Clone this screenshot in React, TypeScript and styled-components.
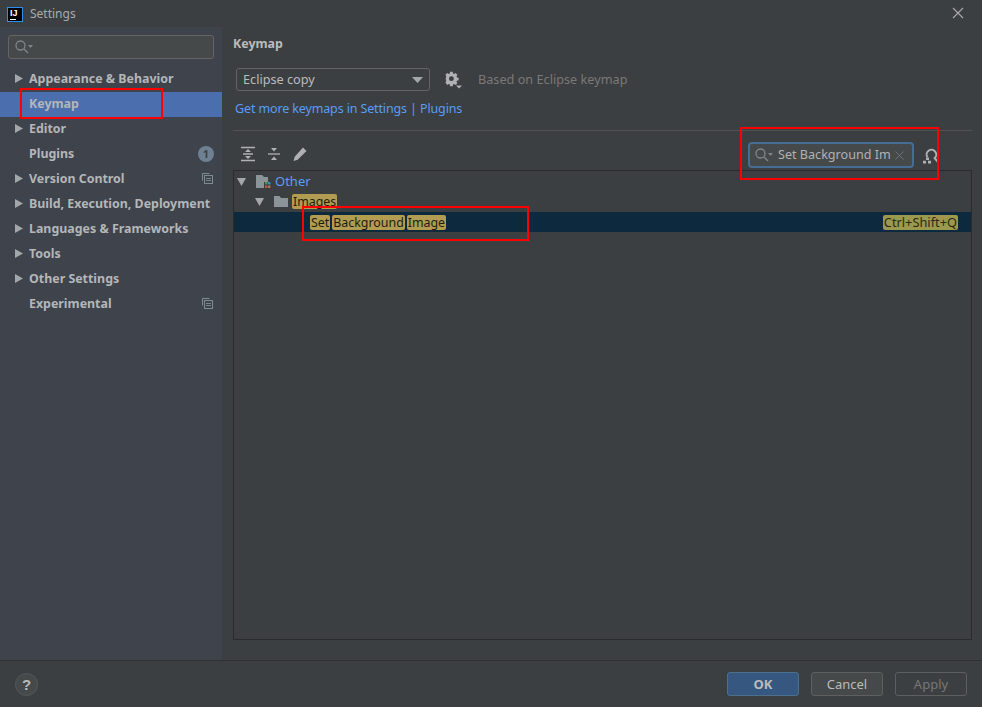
import styled, {createGlobalStyle} from 'styled-components'
import {ReactNode} from 'react'

const GlobalStyle = createGlobalStyle`
  html, body {
    margin: 0;
    padding: 0;
    background: #3c3f41;
  }
  body {
    font-family: "Noto Sans", "Open Sans", sans-serif;
    font-size: 13px;
    color: #bbbbbb;
  }
  * {
    box-sizing: border-box;
  }
`

const menuItems = [
    {label: 'Appearance & Behavior', arrow: true},
    {label: 'Keymap', selected: true},
    {label: 'Editor', arrow: true},
    {label: 'Plugins', badge: true},
    {label: 'Version Control', arrow: true, copy: true},
    {label: 'Build, Execution, Deployment', arrow: true},
    {label: 'Languages & Frameworks', arrow: true},
    {label: 'Tools', arrow: true},
    {label: 'Other Settings', arrow: true},
    {label: 'Experimental', copy: true},
]

function SearchIcon() {
    return (
        <svg width="20" height="16" viewBox="0 0 20 16" fill="none">
            <circle cx="6.5" cy="6.5" r="4.5" stroke="#7f8587" strokeWidth="1.3"/>
            <path d="M10 10l4 4" stroke="#7f8587" strokeWidth="1.4"/>
            <path d="M14 6h5l-2.5 3z" fill="#7f8587"/>
        </svg>
    )
}

function CopyIcon() {
    return (
        <svg width="11" height="11" viewBox="0 0 11 11" fill="none" stroke="#7f8b91">
            <path d="M.5 7.5v-7h7"/>
            <rect x="2.5" y="2.5" width="8" height="8"/>
            <path d="M4 5.5h5M4 7.5h5" strokeWidth=".9"/>
        </svg>
    )
}

function Caret({down}: {down?: boolean}) {
    return (
        <svg width="9" height="9" viewBox="0 0 9 9" fill="#a4a7aa">
            {down ? <path d="M0 1h9L4.5 9z"/> : <path d="M1 0l8 4.5L1 9z"/>}
        </svg>
    )
}

function Mark({children}: {children: ReactNode}) {
    return <Highlight>{children}</Highlight>
}

function App() {
    return (
        <Window>
            <GlobalStyle/>
            <TitleBar>
                <Logo><b>IJ</b><i/></Logo>
                <TitleText>Settings</TitleText>
                <CloseButton>
                    <svg width="12" height="12" viewBox="0 0 12 12" stroke="#a9abad" strokeWidth="1.1">
                        <path d="M1 1l10 10M11 1L1 11"/>
                    </svg>
                </CloseButton>
            </TitleBar>
            <Body>
                <Sidebar>
                    <SideSearch><SearchIcon/></SideSearch>
                    <Menu>
                        {menuItems.map((item) => (
                            <MenuRow key={item.label} $selected={item.selected}>
                                <ArrowSlot>{item.arrow && <Caret/>}</ArrowSlot>
                                <MenuLabel>{item.label}</MenuLabel>
                                {item.badge && <Badge>1</Badge>}
                                {item.copy && <CopySlot><CopyIcon/></CopySlot>}
                            </MenuRow>
                        ))}
                    </Menu>
                    <RedBox $left={20} $top={61} $width={143} $height={31}/>
                </Sidebar>
                <Main>
                    <Heading>Keymap</Heading>
                    <KeymapRow>
                        <Dropdown>
                            <DropdownText>Eclipse copy</DropdownText>
                            <svg width="11" height="6" viewBox="0 0 11 6" fill="#a4a7aa"><path d="M0 0h11L5.5 6z"/></svg>
                        </Dropdown>
                        <GearButton>
                            <svg width="18" height="18" viewBox="0 0 18 18">
                                <path fill="#afb1b3" fillRule="evenodd" d="M6.2 1h3.2l.4 2 1.3.6 1.8-1.1 2.2 2.2-1.1 1.8.6 1.4 2 .4v3.1l-2 .4-.6 1.4 1.1 1.7-2.2 2.2-1.8-1.1-1.3.6-.4 2H6.2l-.4-2-1.3-.6-1.8 1.1L.5 14l1.1-1.7L1 10.9V7.8l.6-1.4L.5 4.7l2.2-2.2 1.8 1.1 1.3-.6zM7.8 6.3a3 3 0 1 0 0 6 3 3 0 0 0 0-6z" transform="scale(.82)"/>
                                <path fill="#afb1b3" d="M11 14.5h6l-3 3z"/>
                            </svg>
                        </GearButton>
                        <Based>Based on Eclipse keymap</Based>
                    </KeymapRow>
                    <LinkLine>Get more keymaps in Settings | Plugins</LinkLine>
                    <Divider/>
                    <Toolbar>
                        <ToolIcons>
                            <svg width="16" height="16" viewBox="0 0 16 16" fill="none" stroke="#afb1b3">
                                <path d="M1 1.5h14M1 14.5h14M3 8h10" strokeWidth="1.3"/>
                                <path d="M5 6l3-3 3 3zM5 10l3 3 3-3z" fill="#afb1b3" stroke="none"/>
                            </svg>
                            <svg width="16" height="16" viewBox="0 0 16 16" fill="none" stroke="#afb1b3">
                                <path d="M2 8h12" strokeWidth="1.3"/>
                                <path d="M5 2l3 3.5L11 2zM5 14l3-3.5 3 3.5z" fill="#afb1b3" stroke="none"/>
                            </svg>
                            <svg width="16" height="16" viewBox="0 0 16 16" fill="#afb1b3">
                                <path d="M11 1.5l3.5 3.5-8.8 8.8L1.5 15l1.2-4.2z"/>
                            </svg>
                        </ToolIcons>
                        <FindField>
                            <SearchIcon/>
                            <FindText>Set Background Im</FindText>
                            <svg width="9" height="9" viewBox="0 0 9 9" stroke="#6e7375"><path d="M.5.5l8 8M8.5.5l-8 8"/></svg>
                        </FindField>
                        <ShortcutFind>
                            <svg width="16" height="16" viewBox="0 0 16 16" fill="none">
                                <path d="M4.4 9.2A4.8 4.8 0 1 1 11.6 10.2L15 14" stroke="#afb1b3" strokeWidth="2"/>
                                <path d="M3 9.5h3v2.5H3zM0 12.8h3v2.7H0zM5 12.8h3v2.7H5z" fill="#afb1b3"/>
                            </svg>
                        </ShortcutFind>
                        <RedBox $left={507} $top={-4} $width={199} $height={53}/>
                    </Toolbar>
                    <Tree>
                        <TreeRow $indent={3} $height={20}>
                            <TreeCaret><Caret down/></TreeCaret>
                            <svg width="16" height="15" viewBox="0 0 16 15">
                                <path fill="#8a9499" d="M1 1h6l2 2h4v5H9v6H1z"/>
                                <rect x="10" y="8" width="2.4" height="2.4" fill="#499c54"/>
                                <rect x="13" y="8" width="2.4" height="2.4" fill="#3592c4"/>
                                <rect x="10" y="11.5" width="2.4" height="2.4" fill="#c75450"/>
                                <rect x="13" y="11.5" width="2.4" height="2.4" fill="#b07a4a"/>
                            </svg>
                            <OtherLabel>Other</OtherLabel>
                        </TreeRow>
                        <TreeRow $indent={21} $height={21}>
                            <TreeCaret><Caret down/></TreeCaret>
                            <svg width="16" height="13" viewBox="0 0 16 13"><path fill="#8a9499" d="M1 1h5.5l1.5 2h7v9H1z"/></svg>
                            <ImagesMark>Images</ImagesMark>
                        </TreeRow>
                        <SelectedRow>
                            <Words><Mark>Set</Mark><Mark>Background</Mark><Mark>Image</Mark></Words>
                            <ShortcutMark>Ctrl+Shift+Q</ShortcutMark>
                        </SelectedRow>
                        <RedBox $left={68} $top={35} $width={227} $height={35}/>
                    </Tree>
                </Main>
            </Body>
            <Footer>
                <HelpButton>?</HelpButton>
                <Buttons>
                    <OkButton>OK</OkButton>
                    <DialogButton>Cancel</DialogButton>
                    <ApplyButton>Apply</ApplyButton>
                </Buttons>
            </Footer>
        </Window>
    )
}

const Window = styled.div`
  width: 982px;
  height: 707px;
  display: flex;
  flex-direction: column;
  overflow: hidden;
  background: #3c3f41;
`

const TitleBar = styled.div`
  height: 27px;
  display: flex;
  align-items: center;
  padding: 2px 0 0 7px;
  flex: none;
`

const Logo = styled.div`
  width: 16px;
  height: 15px;
  background: #000;
  border: 1px solid #2d8fe8;
  color: #fff;
  position: relative;
  b {
    display: block;
    font: bold 9px/9px "Liberation Sans", sans-serif;
    padding: 1px 0 0 2px;
  }
  i {
    position: absolute;
    left: 2px;
    bottom: 1px;
    width: 6px;
    height: 1px;
    background: #fff;
  }
`

const TitleText = styled.span`
  margin: -2px 0 0 7px;
  color: #a9abad;
  font-size: 12px;
`

const CloseButton = styled.div`
  margin: -4px 18px 0 auto;
  display: flex;
`

const Body = styled.div`
  flex: 1;
  display: flex;
  min-height: 0;
`

const Sidebar = styled.div`
  position: relative;
  width: 222px;
  flex: none;
  background: #3e434c;
  padding-top: 8px;
`

const SideSearch = styled.div`
  width: 206px;
  height: 24px;
  margin-left: 8px;
  background: #45494a;
  border: 1px solid #646464;
  border-radius: 3px;
  display: flex;
  align-items: center;
  padding-left: 5px;
`

const Menu = styled.div`
  margin-top: 8px;
`

const MenuRow = styled.div<{$selected?: boolean}>`
  height: 25px;
  display: flex;
  align-items: center;
  padding: 0 8px 2px 0;
  background: ${(p) => (p.$selected ? '#4b6eaf' : 'transparent')};
`

const ArrowSlot = styled.span`
  width: 29px;
  padding-left: 14px;
  display: flex;
  flex: none;
`

const MenuLabel = styled.span`
  font-weight: 700;
  font-size: 12.4px;
  color: #b4b6b8;
  white-space: nowrap;
`

const Badge = styled.span`
  margin-left: auto;
  width: 16px;
  height: 16px;
  border-radius: 50%;
  background: #6e8092;
  color: #3e434c;
  font-size: 11px;
  font-weight: 700;
  line-height: 16px;
  text-align: center;
`

const CopySlot = styled.span`
  margin-left: auto;
  margin-right: 1px;
  display: flex;
`

const Main = styled.div`
  flex: 1;
  min-width: 0;
  padding: 0 10px 20px 11px;
  display: flex;
  flex-direction: column;
`

const Heading = styled.div`
  height: 19px;
  margin-top: 7px;
  font-weight: 700;
  font-size: 12.4px;
  line-height: 19px;
`

const KeymapRow = styled.div`
  margin-top: 15px;
  display: flex;
  align-items: center;
  padding-left: 3px;
  height: 23px;
`

const Dropdown = styled.div`
  width: 194px;
  height: 23px;
  border: 1px solid #646464;
  border-radius: 3px;
  background: #3c3f41;
  display: flex;
  align-items: center;
  justify-content: space-between;
  padding: 0 6px 0 6px;
  color: #bbbbbb;
`

const DropdownText = styled.span`
  font-size: 12.7px;
  margin-top: -2px;
`

const GearButton = styled.div`
  margin-left: 15px;
  width: 18px;
  display: flex;
`

const Based = styled.span`
  margin-left: 15px;
  margin-top: -2px;
  font-size: 12.7px;
  color: #787878;
`

const LinkLine = styled.div`
  margin-top: 9px;
  padding-left: 2px;
  height: 18px;
  line-height: 18px;
  font-size: 12.5px;
  letter-spacing: -0.13px;
  color: #589df6;
`

const Divider = styled.div`
  margin-top: 12px;
  height: 1px;
  background: #515151;
`

const Toolbar = styled.div`
  position: relative;
  height: 39px;
  display: flex;
  align-items: center;
  padding-top: 7px;
`

const ToolIcons = styled.div`
  display: flex;
  gap: 10px;
  padding-left: 7px;
`

const FindField = styled.div`
  position: absolute;
  left: 515px;
  top: 11px;
  width: 166px;
  height: 26px;
  background: #45494a;
  border: 2px solid #466d94;
  border-radius: 4px;
  display: flex;
  align-items: center;
  padding: 0 8px 0 4px;
  gap: 4px;
`

const FindText = styled.span`
  flex: 1;
  overflow: hidden;
  white-space: nowrap;
  font-size: 12.6px;
  margin-top: -1px;
  color: #b0b2b4;
`

const ShortcutFind = styled.div`
  position: absolute;
  left: 690px;
  top: 17px;
  display: flex;
`

const Tree = styled.div`
  position: relative;
  flex: 1;
  border: 1px solid #2b2b2b;
  background: #3c3f41;
  padding-top: 0;
`

const TreeRow = styled.div<{$indent: number; $height: number}>`
  height: ${(p) => p.$height}px;
  display: flex;
  align-items: center;
  padding-left: ${(p) => p.$indent}px;
`

const TreeCaret = styled.span`
  width: 18px;
  display: flex;
`

const OtherLabel = styled.span`
  margin-left: 4px;
  color: #589df6;
`

const Highlight = styled.span`
  display: inline-block;
  height: 15px;
  line-height: 15px;
  font-size: 12.4px;
  padding: 0 1px;
  border-radius: 2px;
  background: #b19c52;
  color: #1e1c10;
`

const ImagesMark = styled(Highlight)`
  margin-left: 3px;
  padding: 0 1px;
`

const SelectedRow = styled.div`
  height: 20px;
  background: #0d293e;
  display: flex;
  align-items: center;
  justify-content: space-between;
  padding: 0 13px 0 76px;
`

const Words = styled.span`
  display: flex;
  gap: 2px;
`

const ShortcutMark = styled(Highlight)`
  font-size: 12.8px;
  background: #9a994d;
  color: #2b2b16;
`

const Footer = styled.div`
  height: 47px;
  flex: none;
  border-top: 1px solid #323232;
  display: flex;
  align-items: center;
  justify-content: space-between;
  padding: 0 15px;
`

const HelpButton = styled.div`
  width: 23px;
  height: 23px;
  border-radius: 50%;
  border: 1px solid #54585a;
  background: #45494a;
  color: #bbbbbb;
  font: bold 15px/21px "Liberation Sans", sans-serif;
  text-align: center;
`

const Buttons = styled.div`
  display: flex;
  gap: 12px;
`

const DialogButton = styled.div`
  width: 72px;
  height: 24px;
  border: 1px solid #5e6060;
  border-radius: 3px;
  background: #45494a;
  color: #bbbbbb;
  line-height: 22px;
  text-align: center;
`

const OkButton = styled(DialogButton)`
  background: #365880;
  border-color: #4c708c;
  font-weight: 700;
`

const ApplyButton = styled(DialogButton)`
  background: transparent;
  border-color: #5e6060;
  color: #777777;
`

const RedBox = styled.div<{$left: number; $top: number; $width: number; $height: number}>`
  position: absolute;
  left: ${(p) => p.$left}px;
  top: ${(p) => p.$top}px;
  width: ${(p) => p.$width}px;
  height: ${(p) => p.$height}px;
  border: 2px solid #f00;
  pointer-events: none;
  z-index: 2;
`

export default App
